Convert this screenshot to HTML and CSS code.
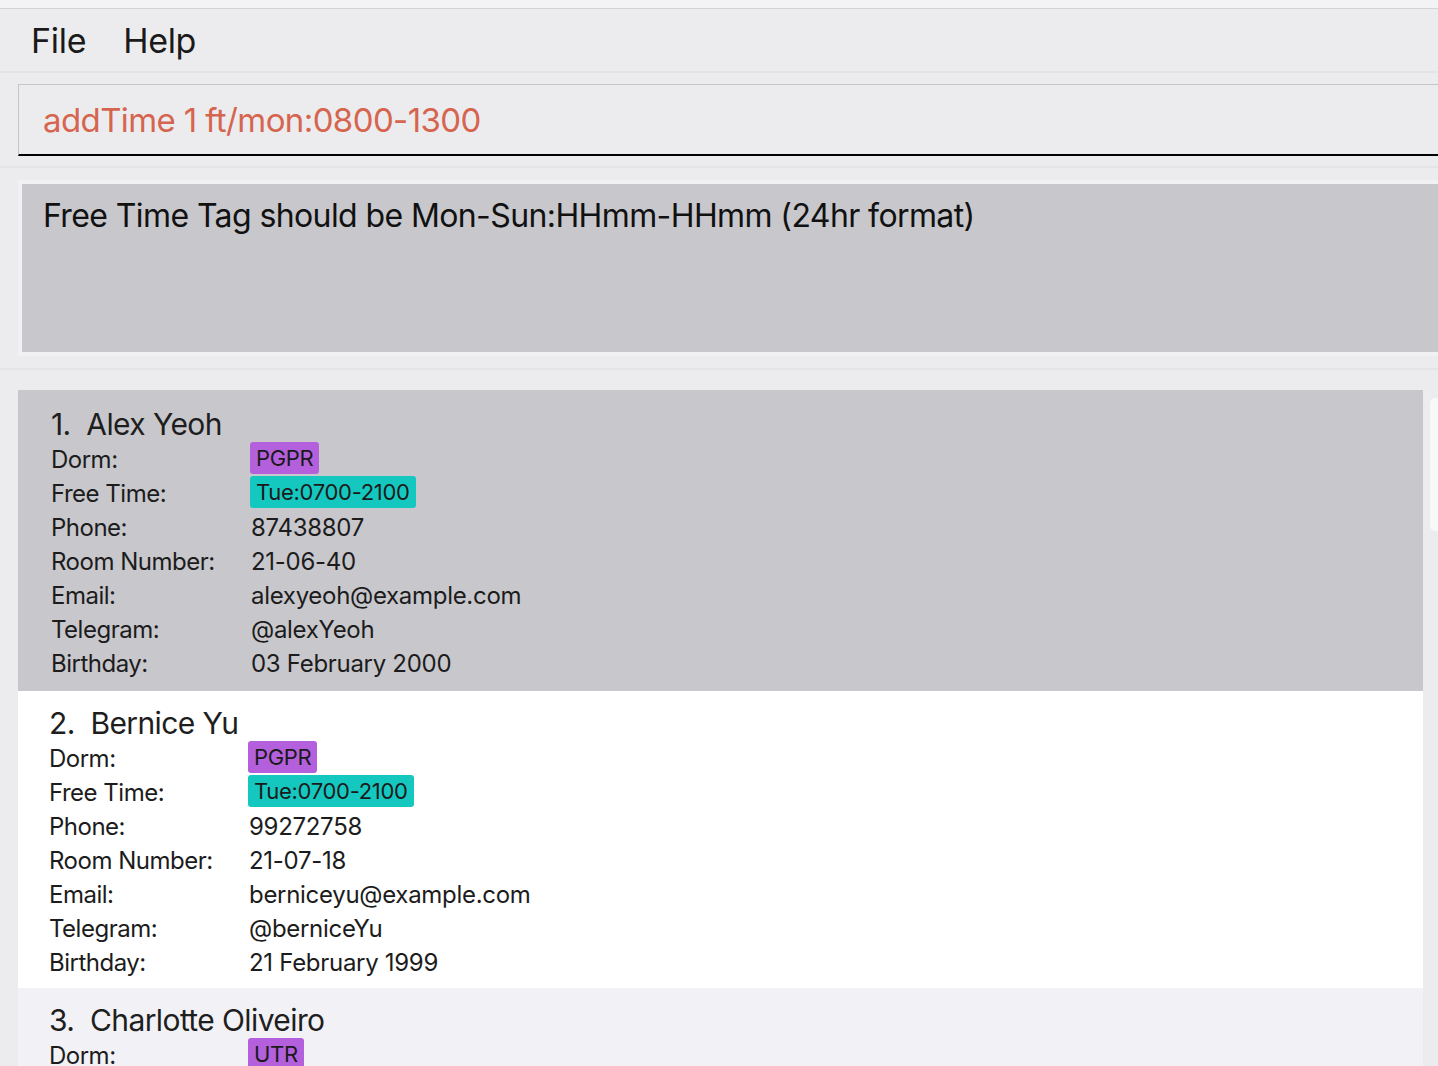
FILE: index.html
```html
<!DOCTYPE html>
<html lang="en">
<head>
<meta charset="utf-8">
<title>Address Book</title>
<link rel="stylesheet" href="styles.css">
</head>
<body>
<div class="app">
  <div class="topstrip"></div>
  <nav class="menubar">
    <span class="menu-item">File</span>
    <span class="menu-item">Help</span>
  </nav>
  <section class="command">
    <div class="command-box">addTime 1 ft/mon:0800-1300</div>
  </section>
  <section class="result">
    <div class="result-outer">
      <div class="result-box">Free Time Tag should be Mon-Sun:HHmm-HHmm (24hr format)</div>
    </div>
  </section>
  <section class="list-area">
    <div class="list">
      <div class="card selected">
        <div class="name">1.&nbsp;&nbsp;Alex Yeoh</div>
        <div class="row"><span class="label">Dorm:</span><span class="chip dorm">PGPR</span></div>
        <div class="row"><span class="label">Free Time:</span><span class="chip time">Tue:0700-2100</span></div>
        <div class="row"><span class="label">Phone:</span><span class="value">87438807</span></div>
        <div class="row"><span class="label">Room Number:</span><span class="value">21-06-40</span></div>
        <div class="row"><span class="label">Email:</span><span class="value">alexyeoh@example.com</span></div>
        <div class="row"><span class="label">Telegram:</span><span class="value">@alexYeoh</span></div>
        <div class="row"><span class="label">Birthday:</span><span class="value">03 February 2000</span></div>
      </div>
      <div class="card white">
        <div class="name">2.&nbsp;&nbsp;Bernice Yu</div>
        <div class="row"><span class="label">Dorm:</span><span class="chip dorm">PGPR</span></div>
        <div class="row"><span class="label">Free Time:</span><span class="chip time">Tue:0700-2100</span></div>
        <div class="row"><span class="label">Phone:</span><span class="value">99272758</span></div>
        <div class="row"><span class="label">Room Number:</span><span class="value">21-07-18</span></div>
        <div class="row"><span class="label">Email:</span><span class="value">berniceyu@example.com</span></div>
        <div class="row"><span class="label">Telegram:</span><span class="value">@berniceYu</span></div>
        <div class="row"><span class="label">Birthday:</span><span class="value">21 February 1999</span></div>
      </div>
      <div class="card tint">
        <div class="name">3.&nbsp;&nbsp;Charlotte Oliveiro</div>
        <div class="row"><span class="label">Dorm:</span><span class="chip dorm">UTR</span></div>
        <div class="row"><span class="label">Free Time:</span><span class="chip time">Tue:0700-2100</span></div>
      </div>
    </div>
    <div class="scroll-thumb"></div>
  </section>
</div>
</body>
</html>
```

FILE: styles.css
```css
html, body {
  margin: 0;
  padding: 0;
  background: #ececee;
  overflow: hidden;
}

.app {
  width: 1438px;
  height: 1066px;
  overflow: hidden;
  font-family: Inter, "Noto Sans", "Liberation Sans", sans-serif;
  color: #1c1c1e;
  background: #ececee;
}

.topstrip {
  height: 8px;
  background: #f3f3f5;
  border-bottom: 1px solid #d2d2d5;
}

.menubar {
  height: 62px;
  display: flex;
  align-items: center;
  gap: 37px;
  padding-left: 31px;
  border-bottom: 2px solid #e4e4e6;
}

.menu-item {
  font-size: 34px;
  letter-spacing: -0.3px;
  color: #1a1a1a;
}

.command {
  padding: 11px 0 10px 18px;
  border-bottom: 2px solid #e4e4e6;
}

.command-box {
  height: 69px;
  margin-right: -10px;
  border: 1px solid #c6c6c8;
  border-right: none;
  border-bottom: 2px solid #000;
  display: flex;
  align-items: center;
  padding-left: 24px;
  font-size: 33px;
  letter-spacing: -0.6px;
  color: #d6654f;
  background: #ececee;
}

.result {
  padding: 12px 0 12px 18px;
  border-bottom: 2px solid #e4e4e6;
}

.result-outer {
  margin-right: -10px;
  border: 4px solid #f1f1f3;
  border-right: none;
}

.result-box {
  height: 168px;
  box-sizing: border-box;
  background: #c8c7cc;
  padding: 13px 0 0 21px;
  font-size: 32px;
  line-height: 38px;
  letter-spacing: -0.6px;
  color: #111;
}

.list-area {
  position: relative;
  padding: 20px 0 0 18px;
}

.list {
  width: 1405px;
}

.card {
  padding: 12px 0 9px 31px;
}

.card.selected {
  background: #c8c7cc;
  padding: 14px 0 11px 33px;
}

.card.white {
  background: #ffffff;
}

.card.tint {
  background: #f2f1f6;
  height: 200px;
}

.name {
  height: 38px;
  line-height: 40px;
  font-size: 30px;
  letter-spacing: -0.6px;
  color: #1e1e1e;
}

.row {
  height: 34px;
  display: flex;
  align-items: flex-start;
}

.label {
  width: 200px;
  flex: none;
  font-size: 24px;
  line-height: 35px;
  letter-spacing: -0.5px;
  color: #1c1c1c;
}

.value {
  font-size: 24px;
  line-height: 35px;
  letter-spacing: -0.3px;
  color: #1c1c1c;
}

.chip {
  margin-left: -1px;
  height: 32px;
  line-height: 33px;
  padding: 0 6px;
  border-radius: 3px;
  font-size: 22px;
  letter-spacing: -0.3px;
  color: #1a1a1a;
}

.chip.dorm {
  background: #b460dd;
}

.chip.time {
  background: #15c8bf;
}

.scroll-thumb {
  position: absolute;
  right: 0;
  top: 28px;
  width: 8px;
  height: 133px;
  background: #f8f8f9;
  border-radius: 5px 0 0 5px;
}
```
